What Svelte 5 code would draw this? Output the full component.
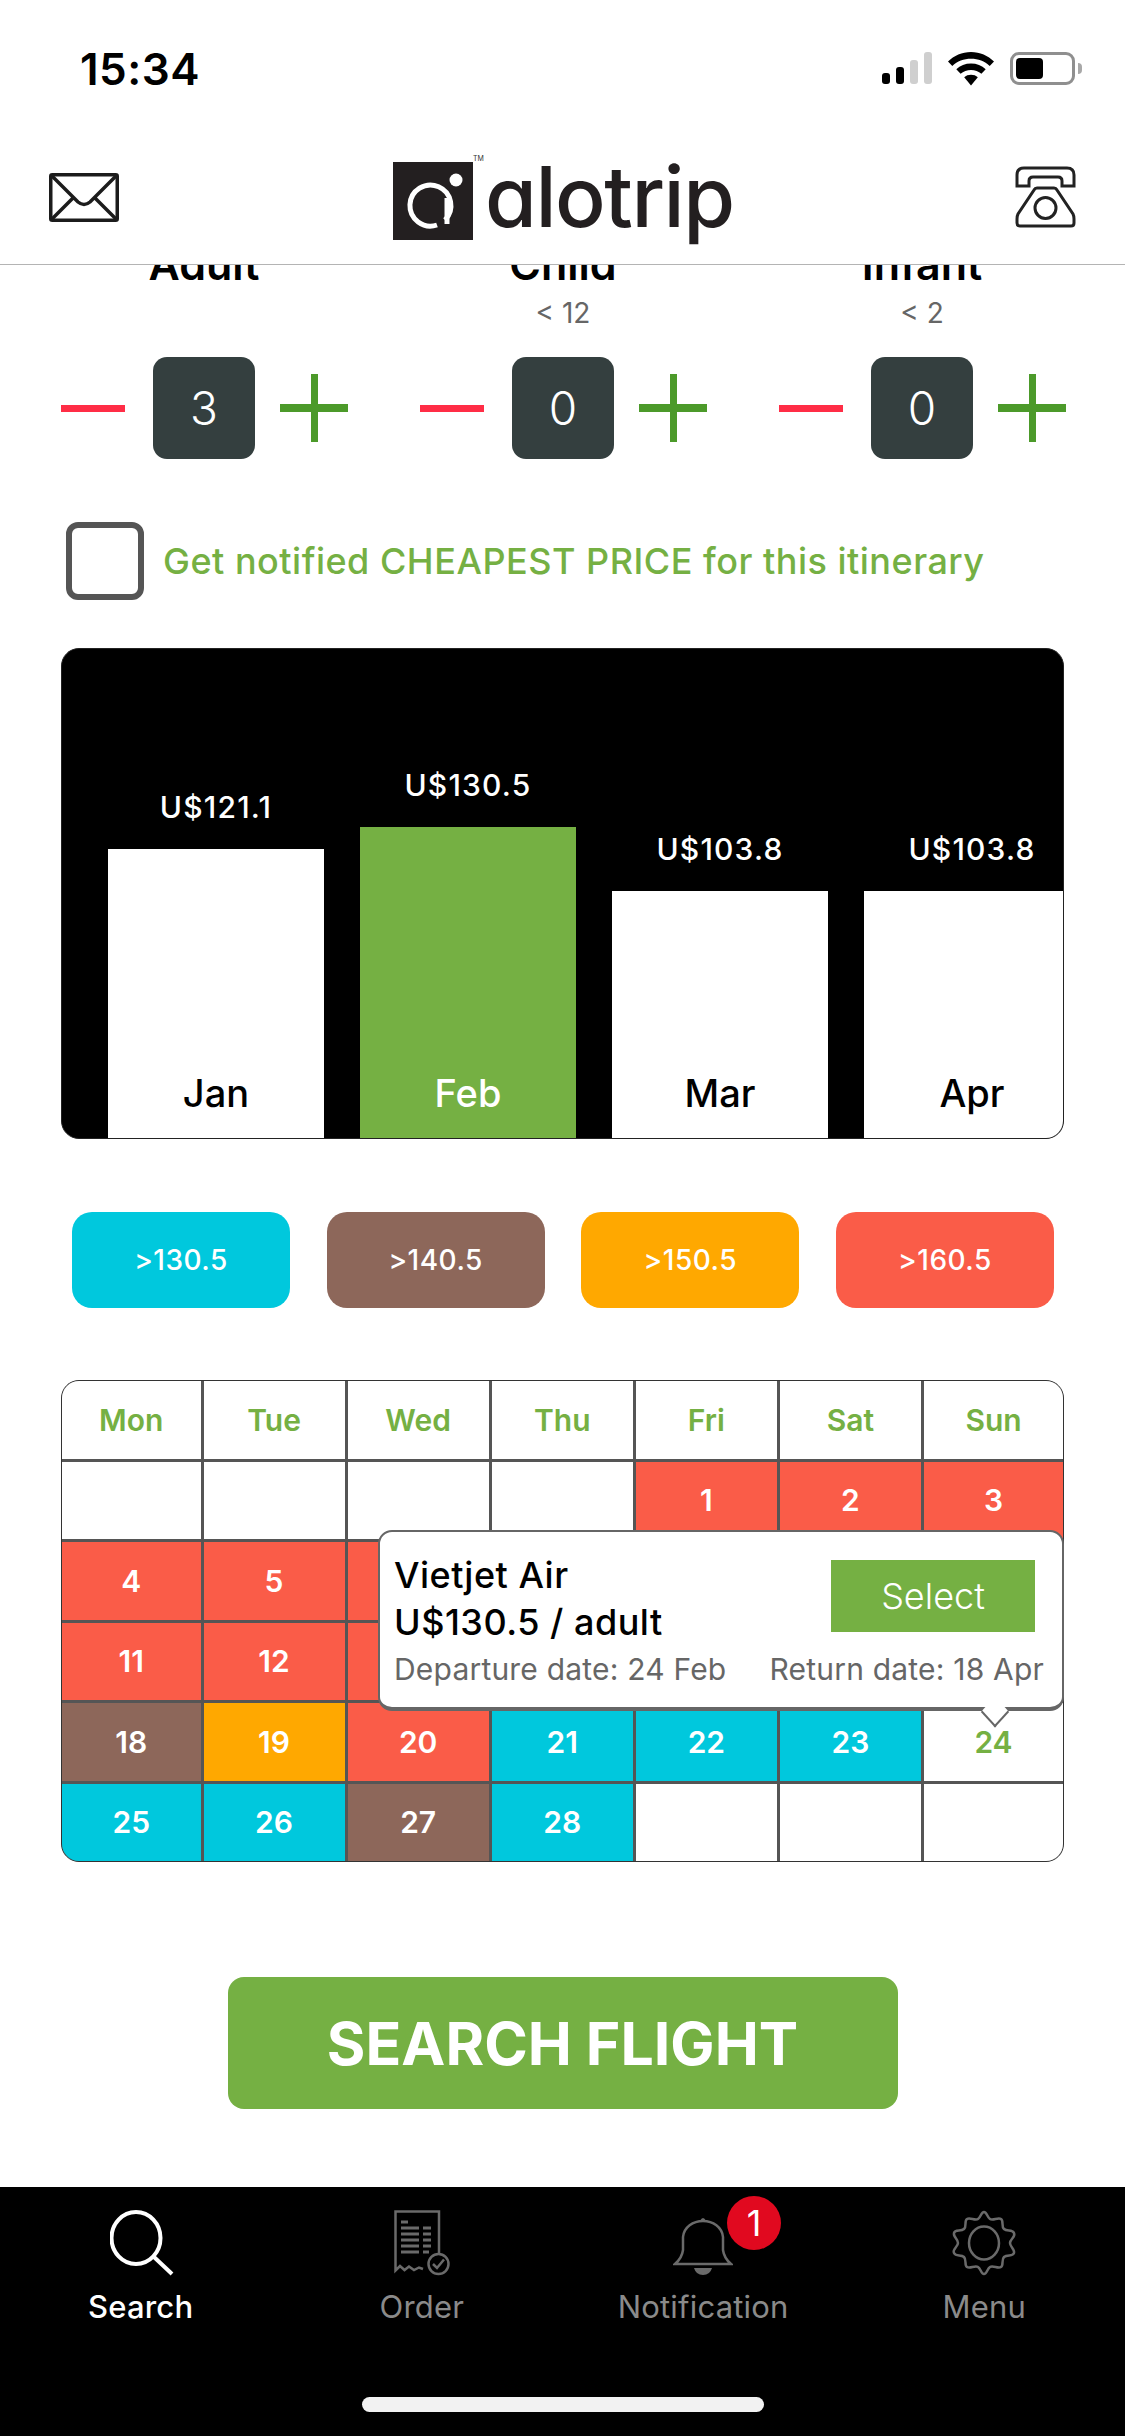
<script lang="ts">
	const paxRows = [
		{ label: 'Adult', sub: '', count: 3 },
		{ label: 'Child', sub: '< 12', count: 0 },
		{ label: 'Infant', sub: '< 2', count: 0 }
	]

	const months = [
		{ name: 'Jan', price: 'U$121.1', height: 289 },
		{ name: 'Feb', price: 'U$130.5', height: 311, active: true },
		{ name: 'Mar', price: 'U$103.8', height: 247 },
		{ name: 'Apr', price: 'U$103.8', height: 247 }
	]

	const legend = [
		{ label: '>130.5', tone: 'cyan' },
		{ label: '>140.5', tone: 'brown' },
		{ label: '>150.5', tone: 'orange' },
		{ label: '>160.5', tone: 'red' }
	]

	const weekdays = ['Mon', 'Tue', 'Wed', 'Thu', 'Fri', 'Sat', 'Sun']

	// [day, tone] week by week. Days under the tooltip are not visible, so they stay blank.
	const weeks = [
		[['', ''], ['', ''], ['', ''], ['', ''], ['1', 'red'], ['2', 'red'], ['3', 'red']],
		[['4', 'red'], ['5', 'red'], ['', 'red'], ['', 'red'], ['', 'red'], ['', 'red'], ['', 'red']],
		[['11', 'red'], ['12', 'red'], ['', 'red'], ['', 'red'], ['', 'red'], ['', 'red'], ['', 'red']],
		[['18', 'brown'], ['19', 'orange'], ['20', 'red'], ['21', 'cyan'], ['22', 'cyan'], ['23', 'cyan'], ['24', 'picked']],
		[['25', 'cyan'], ['26', 'cyan'], ['27', 'brown'], ['28', 'cyan'], ['', ''], ['', ''], ['', '']]
	]

	const tabs = ['Search', 'Order', 'Notification', 'Menu']
</script>

<div class="screen">
	<header class="top">
		<div class="status">
			<span class="clock">15:34</span>
			<div class="status-icons">
				<div class="signal">
					<i class="on s1"></i><i class="on s2"></i><i class="s3"></i><i class="s4"></i>
				</div>
				<svg class="wifi" viewBox="0 0 46 34" aria-hidden="true">
					<path d="M23 0C14 0 6 3.600 0 9.500L4.300 14C9.300 9.300 15.800 6.800 23 6.800S36.700 9.300 41.700 14L46 9.500C40 3.600 32 0 23 0Z" />
					<path d="M23 11.500C17.300 11.500 12.200 13.500 8.300 17.300L12.600 21.700C15.400 19.200 19 17.900 23 17.900S30.600 19.200 33.400 21.700L37.700 17.300C33.800 13.500 28.700 11.500 23 11.500Z" />
					<path d="M23 22.800C20.300 22.800 18 23.600 16.200 25.300L23 33.500L29.800 25.300C28 23.600 25.700 22.800 23 22.800Z" />
				</svg>
				<div class="battery"><span class="level"></span></div>
				<span class="battery-cap"></span>
			</div>
		</div>
		<div class="brandbar">
			<svg class="mail" viewBox="0 0 70 49" aria-hidden="true">
				<rect x="1.750" y="1.750" width="66.500" height="45.500" rx="1.500" />
				<path d="M2 2L29 29Q35 34 41 29L68 2M2 47L24 25M68 47L46 25" />
			</svg>
			<div class="logo">
				<div class="logo-mark">
					<svg viewBox="0 0 80 78" aria-hidden="true">
						<path d="M52 58A20.500 20.500 0 1 0 44 63" />
						<path d="M54 36V62" />
						<circle cx="63" cy="18" r="6.500" />
					</svg>
					<span class="tm">TM</span>
				</div>
				<span class="wordmark">alotrip</span>
			</div>
			<svg class="phone" viewBox="0 0 61 62" aria-hidden="true">
				<path d="M2 9Q2 2 9 2H52Q59 2 59 9V20H47V15Q47 11 43 11H18Q14 11 14 15V20H2Z" />
				<path d="M22 22H39Q41 22 42 24L58 48Q59 50 59 53V57Q59 60 56 60H5Q2 60 2 57V53Q2 50 3 48L19 24Q20 22 22 22Z" />
				<circle cx="30.500" cy="42" r="10.500" />
			</svg>
		</div>
	</header>

	<main class="content">
		<section class="pax">
			{#each paxRows as row}
				<div class="pax-col">
					<div class="pax-label">{row.label}</div>
					<div class="pax-sub">{row.sub}</div>
					<div class="stepper">
						<span class="minus"></span>
						<span class="count">{row.count}</span>
						<span class="plus"></span>
					</div>
				</div>
			{/each}
		</section>

		<label class="notify">
			<span class="box"></span>
			<span>Get notified CHEAPEST PRICE for this itinerary</span>
		</label>

		<section class="chart">
			{#each months as m}
				<div class="month">
					<div class="price">{m.price}</div>
					<div class="bar" class:active={m.active} style={`height: ${m.height}px`}>
						<span>{m.name}</span>
					</div>
				</div>
			{/each}
		</section>

		<section class="legend">
			{#each legend as item}
				<div class={`chip ${item.tone}`}>{item.label}</div>
			{/each}
		</section>

		<section class="calendar">
			<div class="grid">
				{#each weekdays as d}
					<div class="cell head">{d}</div>
				{/each}
				{#each weeks as week}
					{#each week as [day, tone]}
						<div class={`cell ${tone}`}>{day}</div>
					{/each}
				{/each}
			</div>
			<div class="tip">
				<div class="tip-top">
					<div class="tip-title">
						<div>Vietjet Air</div>
						<div>U$130.5 / adult</div>
					</div>
					<div class="select">Select</div>
				</div>
				<div class="tip-dates">
					<span>Departure date: 24 Feb</span>
					<span>Return date: 18 Apr</span>
				</div>
				<span class="tip-arrow"></span>
			</div>
		</section>

		<button class="search">SEARCH FLIGHT</button>
	</main>

	<nav class="tabbar">
		<div class="tabs">
			{#each tabs as t, i}
				<div class="tab" class:current={i === 0}>
					<div class="tab-icon">
						{#if i === 0}
							<svg viewBox="0 0 64 66" class="i-search" aria-hidden="true">
								<ellipse cx="26" cy="28" rx="24.500" ry="26" />
								<path d="M44 47L62 64" />
							</svg>
						{:else if i === 1}
							<svg viewBox="0 0 56 66" class="i-order" aria-hidden="true">
								<path d="M45 44V1.500H1.500V60.500L6 56L10.500 60L15 56.500L20 60L25 57.500L29 59" />
								<path class="thick" d="M7 12H14M7 18H25M29 18H37M7 24H25M29 24H37M7 30H25M29 30H37M7 36H25M29 36H37M7 42H25M29 42H35" />
								<circle cx="44.500" cy="54" r="10" />
								<path d="M39 54L43 58L50 49.500" />
							</svg>
						{:else if i === 2}
							<svg viewBox="0 0 60 60" class="i-bell" aria-hidden="true">
								<path d="M2 48Q9 42 10 34V21C11 11 20 5 30 5S49 11 50 21V34Q51 42 58 48Z" />
								<path class="fill" d="M27 5Q30 -1 33 5ZM21 52H39Q37 59 30 59T21 52Z" />
							</svg>
							<span class="badge">1</span>
						{:else}
							<svg viewBox="0 0 66 66" class="i-gear" aria-hidden="true">
								<path d="M33 2C36 2 36 7 39 9C42 11 47 7 50 9S50 16 53 19S61 19 63 23S59 29 59 33S64 39 63 43S56 44 53 47S53 55 50 57S42 55 39 57S36 64 33 64S30 59 27 57S19 59 16 57S16 50 13 47S5 47 3 43S7 37 7 33S2 27 3 23S10 22 13 19S13 11 16 9S24 11 27 9S30 2 33 2Z" />
								<ellipse cx="33" cy="33" rx="15" ry="16.500" />
							</svg>
						{/if}
					</div>
					<span class="tab-label">{t}</span>
				</div>
			{/each}
		</div>
		<div class="home"></div>
	</nav>
</div>

<style>
	:global(body) {
		margin: 0;
		background: #fff;
	}

	.screen {
		width: 1125px;
		height: 2436px;
		display: flex;
		flex-direction: column;
		overflow: hidden;
		background: #fff;
		color: #000;
		font-family: Inter, "Liberation Sans", sans-serif;
	}

	/* top: status + logo */
	.top {
		height: 264px;
		flex-shrink: 0;
		border-bottom: 1px solid #b4b4b4;
		background: #fff;
		position: relative;
		z-index: 2;
	}
	.status {
		height: 135px;
		display: flex;
		justify-content: space-between;
		align-items: flex-start;
		padding: 52px 43px 0 80px;
		box-sizing: border-box;
	}
	.clock {
		font-size: 44px;
		font-weight: 600;
		line-height: 34px;
		letter-spacing: 0.5px;
	}
	.status-icons {
		display: flex;
		align-items: flex-start;
		position: relative;
	}
	.signal {
		display: flex;
		align-items: flex-end;
		gap: 6px;
		height: 32px;
		margin-right: 16px;
	}
	.signal i {
		width: 8px;
		border-radius: 3px;
		background: #cfcfcf;
	}
	.signal i.on { background: #000; }
	.s1 { height: 11px; }
	.s2 { height: 17px; }
	.s3 { height: 24px; }
	.s4 { height: 32px; }
	.wifi {
		width: 46px;
		height: 34px;
		margin-right: 16px;
	}
	.battery {
		width: 65px;
		height: 33px;
		box-sizing: border-box;
		border: 3px solid #8f8f8f;
		border-radius: 9px;
		padding: 3px 3px;
	}
	.level {
		display: block;
		width: 27px;
		height: 100%;
		background: #000;
		border-radius: 4px;
	}
	.battery-cap {
		width: 4px;
		height: 11px;
		margin: 11px 0 0 3px;
		background: #a8a8a8;
		border-radius: 0 4px 4px 0;
	}

	.brandbar {
		height: 129px;
		display: flex;
		align-items: flex-start;
		padding: 0 49px;
		position: relative;
	}
	.mail {
		width: 70px;
		height: 49px;
		margin-top: 38px;
		fill: none;
		stroke: #1c1c1c;
		stroke-width: 3.500;
	}
	.phone {
		width: 61px;
		height: 62px;
		margin-top: 31px;
		margin-left: auto;
		fill: none;
		stroke: #222;
		stroke-width: 3;
	}
	.logo {
		position: absolute;
		left: 393px;
		top: 27px;
		display: flex;
		gap: 12px;
	}
	.logo-mark {
		position: relative;
		width: 80px;
		height: 78px;
		background: #231f20;
	}
	.logo-mark svg {
		display: block;
		width: 80px;
		height: 78px;
		fill: none;
		stroke: #fff;
		stroke-width: 5;
	}
	.logo-mark circle {
		fill: #fff;
		stroke: none;
	}
	.tm {
		position: absolute;
		left: 80px;
		top: -7px;
		font-size: 7px;
		line-height: 7px;
		color: #333;
	}
	.wordmark {
		font-size: 84px;
		line-height: 70px;
		font-weight: 500;
		color: #231f20;
		font-feature-settings: 'cv11' 1;
		letter-spacing: -1.500px;
	}

	/* scrolled content */
	.content {
		flex: 1;
		min-height: 0;
		overflow: hidden;
		display: flex;
		flex-direction: column;
		position: relative;
	}

	.pax {
		display: grid;
		grid-template-columns: repeat(3, 359px);
		padding-left: 61px;
		margin-top: -21px;
	}
	.pax-col {
		width: 287px;
	}
	.pax-label {
		width: 286px;
		text-align: center;
		font-size: 43px;
		line-height: 41px;
		font-weight: 600;
	}
	.pax-sub {
		width: 286px;
		height: 30px;
		margin-top: 13px;
		text-align: center;
		font-size: 28px;
		line-height: 30px;
		color: #666;
	}
	.stepper {
		display: flex;
		align-items: center;
		height: 102px;
		margin-top: 29px;
	}
	.minus {
		width: 64px;
		height: 7px;
		background: #ff2d46;
	}
	.count {
		width: 102px;
		height: 102px;
		margin-left: 28px;
		border-radius: 14px;
		background: #343f3f;
		color: #fff;
		display: flex;
		align-items: center;
		justify-content: center;
		font-size: 46px;
		font-weight: 300;
	}
	.plus {
		position: relative;
		width: 68px;
		height: 68px;
		margin-left: 25px;
	}
	.plus::before,
	.plus::after {
		content: '';
		position: absolute;
		background: #4c9a2a;
	}
	.plus::before {
		left: 0;
		right: 0;
		top: 30px;
		height: 8px;
	}
	.plus::after {
		top: 0;
		bottom: 0;
		left: 31px;
		width: 7px;
	}

	.notify {
		display: flex;
		align-items: center;
		gap: 19px;
		margin: 63px 0 0 66px;
		font-size: 36px;
		font-weight: 500;
		color: #75b043;
		letter-spacing: 0.5px;
	}
	.box {
		width: 78px;
		height: 78px;
		box-sizing: border-box;
		border: 6px solid #555;
		border-radius: 12px;
	}

	.chart {
		margin: 48px 61px 0;
		height: 491px;
		box-sizing: border-box;
		background: #000;
		border: 1px solid #222;
		border-radius: 18px;
		overflow: hidden;
		display: flex;
		align-items: flex-end;
		gap: 36px;
		padding-left: 46px;
	}
	.month {
		flex: 0 0 216px;
		text-align: center;
	}
	.price {
		color: #fff;
		font-size: 30px;
		font-weight: 500;
		line-height: 36px;
		margin-bottom: 24px;
		letter-spacing: 1.200px;
	}
	.bar {
		background: #fff;
		color: #000;
		box-sizing: border-box;
		display: flex;
		align-items: flex-end;
		justify-content: center;
		padding-bottom: 25px;
		font-size: 38px;
		font-weight: 500;
		line-height: 40px;
	}
	.bar.active {
		background: #75b043;
		color: #fff;
	}

	.legend {
		display: flex;
		justify-content: space-between;
		margin: 73px 71px 0 72px;
	}
	.chip {
		width: 218px;
		height: 96px;
		border-radius: 20px;
		color: #fff;
		display: flex;
		align-items: center;
		justify-content: center;
		font-size: 28px;
		font-weight: 500;
		letter-spacing: 0.5px;
	}
	.cyan { background: #00c8dd; }
	.brown { background: #8d675a; }
	.orange { background: #ffa800; }
	.red { background: #fa5c48; }

	.calendar {
		position: relative;
		margin: 72px 61px 0;
		height: 482px;
	}
	.grid {
		height: 100%;
		box-sizing: border-box;
		border: 1.500px solid #333;
		border-radius: 18px;
		overflow: hidden;
		background: #555;
		display: grid;
		grid-template-columns: 138.500px repeat(5, 1fr) 139px;
		grid-template-rows: repeat(6, 1fr);
		gap: 3px;
	}
	.cell {
		display: flex;
		align-items: center;
		justify-content: center;
		font-size: 30px;
		font-weight: 600;
		color: #fff;
	}
	.cell:not(.red):not(.cyan):not(.brown):not(.orange) {
		background: #fff;
	}
	.cell.head,
	.cell.picked {
		color: #75b043;
	}

	.tip {
		position: absolute;
		left: 317px;
		right: 0;
		top: 150px;
		height: 181px;
		box-sizing: border-box;
		background: #fff;
		border: 2px solid #666;
		border-bottom-width: 4px;
		border-radius: 14px;
		padding: 20px 18px 0 14px;
	}
	.tip-top {
		display: flex;
		justify-content: space-between;
		align-items: flex-start;
	}
	.tip-title {
		font-size: 36px;
		font-weight: 500;
		line-height: 47px;
		letter-spacing: 0.5px;
	}
	.select {
		width: 204px;
		height: 72px;
		margin-top: 8px;
		margin-right: 9px;
		background: #75b043;
		color: #fff;
		display: flex;
		align-items: center;
		justify-content: center;
		font-size: 36px;
		font-weight: 300;
	}
	.tip-dates {
		display: flex;
		justify-content: space-between;
		margin-top: 5px;
		font-size: 30px;
		line-height: 36px;
		color: #666;
		white-space: nowrap;
		letter-spacing: 0.2px;
	}
	.tip-arrow {
		position: absolute;
		left: 605px;
		bottom: -15px;
		width: 20px;
		height: 20px;
		box-sizing: border-box;
		background: #fff;
		border-right: 2px solid #666;
		border-bottom: 2px solid #666;
		transform: scaleY(1.100) rotate(45deg);
	}

	.search {
		align-self: center;
		margin: 115px 0 0;
		width: 670px;
		height: 132px;
		border: 0;
		border-radius: 16px;
		background: #75b043;
		color: #fff;
		font-family: inherit;
		font-size: 59px;
		font-weight: 700;
		padding: 0;
	}

	/* bottom nav */
	.tabbar {
		height: 249px;
		flex-shrink: 0;
		background: #000;
		position: relative;
	}
	.tabs {
		display: grid;
		grid-template-columns: repeat(4, 1fr);
		padding-top: 20px;
	}
	.tab {
		display: flex;
		flex-direction: column;
		align-items: center;
		color: #8a8a8a;
		font-size: 31px;
		font-weight: 400;
		letter-spacing: 0.2px;
	}
	.tab.current {
		color: #fff;
		font-weight: 500;
	}
	.tab-icon {
		position: relative;
		height: 69px;
		display: flex;
		align-items: flex-end;
		justify-content: center;
	}
	.tab-icon svg {
		fill: none;
		stroke: #6a6a6a;
		stroke-width: 2.500;
		display: block;
	}
	.i-search {
		width: 64px;
		height: 66px;
		stroke: #fff !important;
		stroke-width: 4 !important;
		margin-left: 3px;
	}
	.i-order {
		width: 56px;
		height: 66px;
	}
	.i-order .thick { stroke-width: 3; }
	.i-bell {
		width: 60px;
		height: 60px;
	}
	.i-bell .fill {
		fill: #6a6a6a;
		stroke: none;
	}
	.i-gear {
		width: 66px;
		height: 66px;
	}
	.badge {
		position: absolute;
		left: 54px;
		top: -11px;
		width: 54px;
		height: 54px;
		border-radius: 50%;
		background: #e1091f;
		color: #fff;
		font-size: 36px;
		font-weight: 400;
		display: flex;
		align-items: center;
		justify-content: center;
	}
	.tab-label {
		margin-top: 13px;
		line-height: 36px;
	}
	.home {
		position: absolute;
		left: 362px;
		top: 210px;
		width: 402px;
		height: 15px;
		border-radius: 8px;
		background: #f2f2f2;
	}
</style>
